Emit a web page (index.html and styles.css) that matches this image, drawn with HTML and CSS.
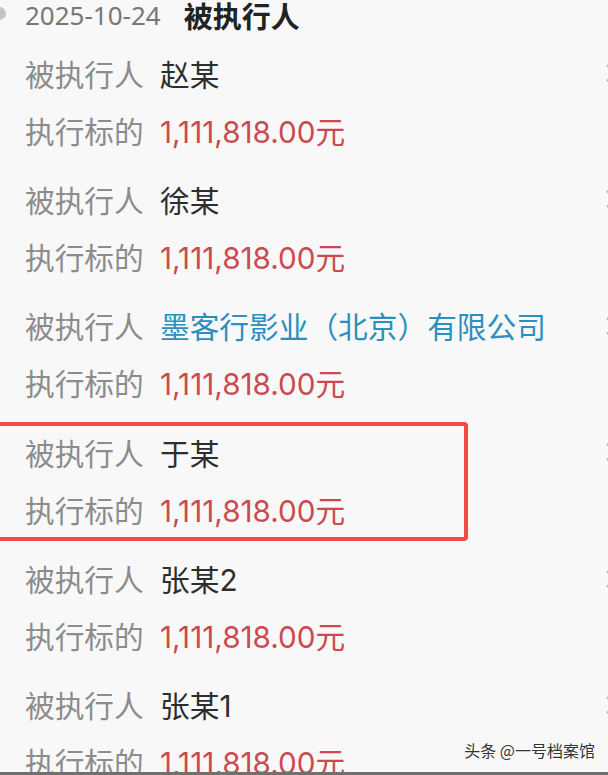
FILE: index.html
```html
<!DOCTYPE html>
<html lang="zh-CN">
<head>
    <meta charset="UTF-8">
    <meta name="viewport" content="width=device-width, initial-scale=1.0">
    <title>被执行人</title>
    <link rel="stylesheet" href="styles.css">
</head>
<body>
    <div class="page">
        <div class="head">
            <span class="date">2025-10-24</span>
            <span class="head-title">被执行人</span>
        </div>
        <div class="list">
            <div class="record">
                <div class="line">
                    <span class="label">被执行人</span>
                    <span class="name">赵某</span>
                    <svg class="chev" width="12" height="20" viewBox="0 0 12 20"><polyline points="2,2 10,10 2,18" /></svg>
                </div>
                <div class="line">
                    <span class="label">执行标的</span>
                    <span class="value">1,111,818.00<span class="unit">元</span></span>
                </div>
            </div>
            <div class="record">
                <div class="line">
                    <span class="label">被执行人</span>
                    <span class="name">徐某</span>
                    <svg class="chev" width="12" height="20" viewBox="0 0 12 20"><polyline points="2,2 10,10 2,18" /></svg>
                </div>
                <div class="line">
                    <span class="label">执行标的</span>
                    <span class="value">1,111,818.00<span class="unit">元</span></span>
                </div>
            </div>
            <div class="record">
                <div class="line">
                    <span class="label">被执行人</span>
                    <span class="name link">墨客行影业（北京）有限公司</span>
                    <svg class="chev" width="12" height="20" viewBox="0 0 12 20"><polyline points="2,2 10,10 2,18" /></svg>
                </div>
                <div class="line">
                    <span class="label">执行标的</span>
                    <span class="value">1,111,818.00<span class="unit">元</span></span>
                </div>
            </div>
            <div class="record marked">
                <div class="line">
                    <span class="label">被执行人</span>
                    <span class="name">于某</span>
                    <svg class="chev" width="12" height="20" viewBox="0 0 12 20"><polyline points="2,2 10,10 2,18" /></svg>
                </div>
                <div class="line">
                    <span class="label">执行标的</span>
                    <span class="value">1,111,818.00<span class="unit">元</span></span>
                </div>
            </div>
            <div class="record">
                <div class="line">
                    <span class="label">被执行人</span>
                    <span class="name">张某<span class="num">2</span></span>
                    <svg class="chev" width="12" height="20" viewBox="0 0 12 20"><polyline points="2,2 10,10 2,18" /></svg>
                </div>
                <div class="line">
                    <span class="label">执行标的</span>
                    <span class="value">1,111,818.00<span class="unit">元</span></span>
                </div>
            </div>
            <div class="record">
                <div class="line">
                    <span class="label">被执行人</span>
                    <span class="name">张某<span class="num">1</span></span>
                    <svg class="chev" width="12" height="20" viewBox="0 0 12 20"><polyline points="2,2 10,10 2,18" /></svg>
                </div>
                <div class="line">
                    <span class="label">执行标的</span>
                    <span class="value">1,111,818.00<span class="unit">元</span></span>
                </div>
            </div>
        </div>
    </div>
    <div class="watermark">头条 @一号档案馆</div>
    <div class="bottom-bar"></div>
</body>
</html>
```

FILE: styles.css
```css
html, body {
    margin: 0;
    padding: 0;
    height: 775px;
    overflow: hidden;
}
body {
    font-family: "Noto Sans", "Noto Sans CJK SC", sans-serif;
    background-color: #f8f8f8;
    color: #333;
    position: relative;
}
.page {
    width: 620px;
    box-sizing: border-box;
    padding: 1px 3px 0 25px;
}
.head {
    position: relative;
    display: flex;
    align-items: center;
    gap: 23px;
    height: 28px;
}
.head::before {
    content: "";
    position: absolute;
    left: -32px;
    top: 6px;
    width: 13px;
    height: 13px;
    border-radius: 50%;
    background-color: #c4c4c4;
}
.date {
    font-size: 26px;
    color: #777;
}
.head-title {
    font-family: "Noto Sans CJK SC", sans-serif;
    font-size: 29px;
    font-weight: bold;
    color: #222;
}
.list {
    margin-top: 22px;
}
.record {
    display: flex;
    flex-direction: column;
    gap: 13px;
    margin-bottom: 25.4px;
}
.line {
    display: flex;
    align-items: center;
    height: 44px;
    font-family: "Noto Sans CJK SC", sans-serif;
    font-size: 29.7px;
}
.label {
    width: 135px;
    flex-shrink: 0;
    color: #8c8c8c;
}
.name {
    color: #2e2e2e;
}
.name.link {
    color: #2b8fc0;
}
.num {
    font-family: "Inter", sans-serif;
}
.value {
    font-family: "Inter", "Noto Sans CJK SC", sans-serif;
    color: #cb4a50;
}
.unit {
    font-family: "Noto Sans CJK SC", sans-serif;
}
.chev {
    margin-left: auto;
    fill: none;
    stroke: #b5b5b5;
    stroke-width: 2;
}
.marked {
    position: relative;
}
.marked::after {
    content: "";
    position: absolute;
    left: -40px;
    top: -8px;
    bottom: -10px;
    width: 475px;
    border: 4px solid #f04a4a;
    border-radius: 4px;
}
.watermark {
    position: absolute;
    right: 13px;
    bottom: 13px;
    font-family: "Noto Sans CJK SC", sans-serif;
    font-size: 16px;
    color: #333;
    text-shadow: 0 0 2px #fff, 0 0 2px #fff;
}
.bottom-bar {
    position: absolute;
    left: 0;
    right: 0;
    bottom: 0;
    height: 3px;
    background-color: #707070;
}
```
